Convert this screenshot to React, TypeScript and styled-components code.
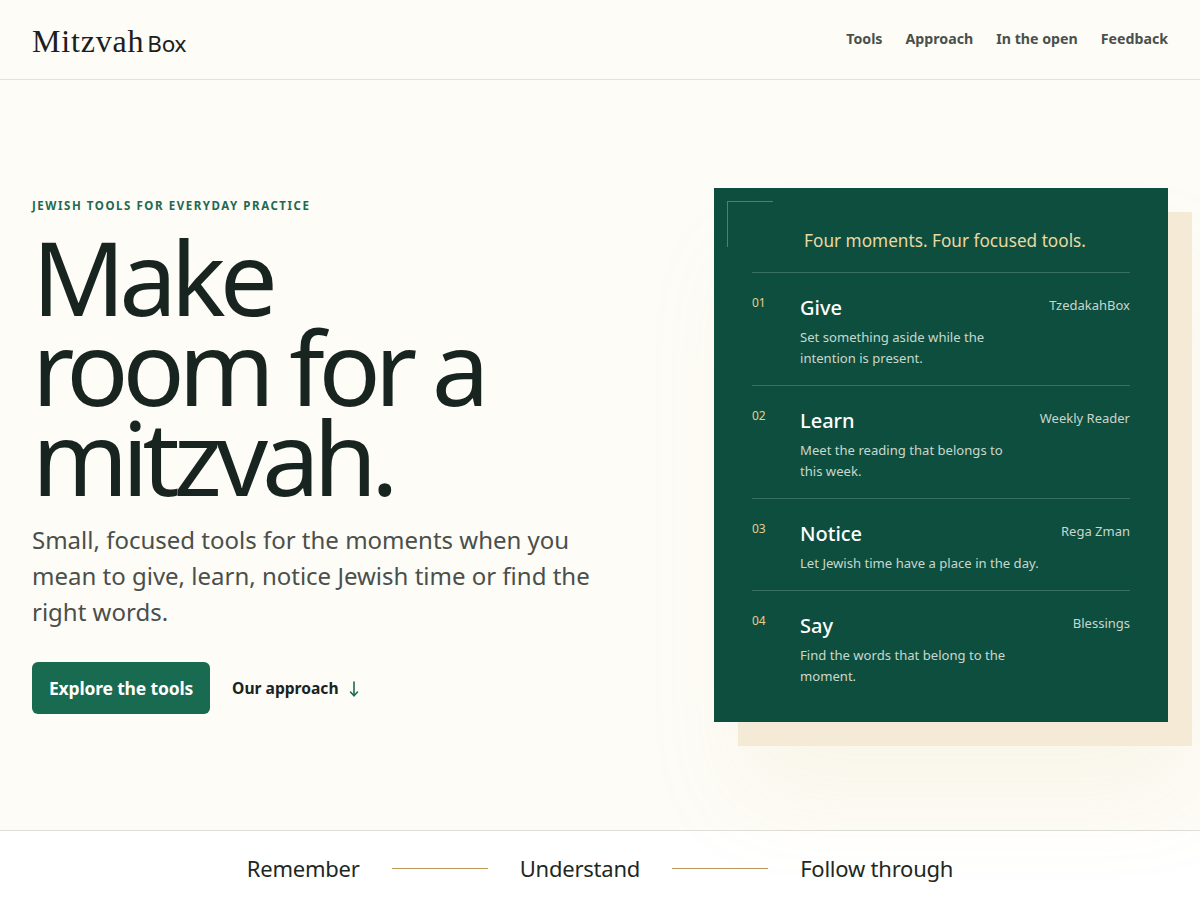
import React from "react";
import styled, { createGlobalStyle } from "styled-components";

const Global = createGlobalStyle`
  html, body { margin: 0; padding: 0; }
  body {
    background: #fdfcf7;
    font-family: "Noto Sans", "Open Sans", sans-serif;
    color: #18251f;
    -webkit-font-smoothing: antialiased;
  }
  * { box-sizing: border-box; }
`;

const Page = styled.div`
  min-height: 900px;
  display: flex;
  flex-direction: column;
  overflow: hidden;
`;

const Header = styled.header`
  height: 80px;
  padding: 0 32px;
  display: flex;
  align-items: center;
  justify-content: space-between;
  border-bottom: 1px solid #e4e3dc;
`;

const Logo = styled.a`
  display: flex;
  align-items: baseline;
  gap: 3px;
  color: #1a201d;
  text-decoration: none;
  margin-top: 3px;
`;

const LogoSerif = styled.span`
  font-family: "Liberation Serif", "DejaVu Serif", serif;
  font-size: 32px;
  letter-spacing: 0.025em;
`;

const LogoSans = styled.span`
  font-family: "Noto Sans", "Open Sans", sans-serif;
  font-size: 22.5px;
  letter-spacing: -0.01em;
`;

const Nav = styled.nav`
  display: flex;
  gap: 23px;
  margin-top: -2px;
`;

const NavLink = styled.a`
  font-size: 14.2px;
  font-weight: 700;
  color: #4a504c;
  text-decoration: none;
`;

const Hero = styled.section`
  flex: 1;
  height: 750px;
  padding: 0 32px;
  display: grid;
  grid-template-columns: 1fr 454px;
  gap: 48px;
  align-items: center;
`;

const Left = styled.div`
  display: flex;
  flex-direction: column;
  margin-top: 2px;
`;

const Eyebrow = styled.p`
  margin: 0;
  font-size: 11.5px;
  font-weight: 700;
  letter-spacing: 0.135em;
  color: #1d6a51;
  text-transform: uppercase;
`;

const Headline = styled.h1`
  margin: 18px 0 0 0;
  font-size: 103px;
  font-weight: 400;
  line-height: 90px;
  letter-spacing: -0.06em;
  color: #18241f;
`;

const Lead = styled.p`
  margin: 21px 0 0 0;
  max-width: 580px;
  font-size: 24px;
  line-height: 36px;
  color: #4a4f4b;
`;

const Actions = styled.div`
  margin-top: 32px;
  display: flex;
  align-items: center;
  gap: 22px;
`;

const Primary = styled.a`
  display: inline-flex;
  align-items: center;
  height: 52px;
  padding: 0 17px;
  border-radius: 6px;
  background: #186a51;
  color: #ffffff;
  font-size: 17.5px;
  font-weight: 700;
  text-decoration: none;
  letter-spacing: -0.01em;
`;

const Secondary = styled.a`
  display: inline-flex;
  align-items: center;
  gap: 9px;
  font-size: 15.6px;
  font-weight: 700;
  color: #18241f;
  text-decoration: none;
`;

const ArrowIcon = styled.svg`
  width: 12px;
  height: 18px;
  color: #1d6a51;
  margin-top: 2px;
`;

const CardWrap = styled.div`
  position: relative;
  margin: 24px 0;
`;

const Plate = styled.div`
  position: absolute;
  left: 24px;
  top: 24px;
  right: -24px;
  bottom: -24px;
  background: #f4ead6;
  box-shadow: 0 50px 90px rgba(215, 185, 120, 0.1);
`;

const Card = styled.div`
  position: relative;
  background: #0e4e3e;
  padding: 39px 38px 19px 38px;
`;

const Corner = styled.span`
  position: absolute;
  left: 13px;
  top: 13px;
  width: 46px;
  height: 46px;
  border-top: 1px solid rgba(200, 225, 210, 0.35);
  border-left: 1px solid rgba(200, 225, 210, 0.35);
`;

const CardTitle = styled.p`
  margin: 0 0 18px 0;
  text-align: center;
  padding-left: 8px;
  font-size: 17.2px;
  line-height: 27px;
  color: #ead9a2;
`;

const List = styled.ol`
  list-style: none;
  margin: 0;
  padding: 0;
`;

const Row = styled.li`
  display: grid;
  grid-template-columns: 32px 1fr auto;
  column-gap: 16px;
  padding: 21px 0 16px 0;
  border-top: 1px solid rgba(170, 205, 185, 0.28);
`;

const Num = styled.span`
  grid-row: 1 / span 2;
  font-size: 12px;
  line-height: 18px;
  color: #e2cf8e;
`;

const Name = styled.span`
  font-size: 20px;
  font-weight: 500;
  line-height: 27px;
  color: #ffffff;
`;

const Tool = styled.span`
  grid-column: 3;
  grid-row: 1;
  font-size: 13px;
  line-height: 20px;
  margin-top: 1px;
  color: #c8d6cd;
  text-align: right;
`;

const Desc = styled.span`
  grid-column: 2;
  grid-row: 2;
  margin-top: 6px;
  font-size: 13.1px;
  line-height: 21px;
  color: #c8d7cd;
`;

const Strip = styled.footer`
  height: 70px;
  background: #ffffff;
  border-top: 1px solid #dedfd8;
  display: flex;
  align-items: center;
  justify-content: center;
  gap: 32px;
  padding-top: 5px;
`;

const StripWord = styled.span`
  font-size: 22px;
  color: #1e2823;
  letter-spacing: -0.01em;
`;

const StripLine = styled.span`
  width: 96px;
  height: 1px;
  background: #b8995a;
`;

const tools = [
  { n: "01", name: "Give", tool: "TzedakahBox", desc: "Set something aside while the intention is present." },
  { n: "02", name: "Learn", tool: "Weekly Reader", desc: "Meet the reading that belongs to this week." },
  { n: "03", name: "Notice", tool: "Rega Zman", desc: "Let Jewish time have a place in the day." },
  { n: "04", name: "Say", tool: "Blessings", desc: "Find the words that belong to the moment." },
];

export default function App() {
  return (
    <Page>
      <Global />
      <Header>
        <Logo href="#">
          <LogoSerif>Mitzvah</LogoSerif>
          <LogoSans>Box</LogoSans>
        </Logo>
        <Nav>
          <NavLink href="#">Tools</NavLink>
          <NavLink href="#">Approach</NavLink>
          <NavLink href="#">In the open</NavLink>
          <NavLink href="#">Feedback</NavLink>
        </Nav>
      </Header>
      <Hero>
        <Left>
          <Eyebrow>Jewish tools for everyday practice</Eyebrow>
          <Headline>
            Make
            <br />
            room for a
            <br />
            mitzvah.
          </Headline>
          <Lead>
            Small, focused tools for the moments when you mean to give, learn, notice Jewish time or find the right words.
          </Lead>
          <Actions>
            <Primary href="#">Explore the tools</Primary>
            <Secondary href="#">
              Our approach
              <ArrowIcon viewBox="0 0 12 18" fill="none" stroke="currentColor" strokeWidth="1.6" strokeLinecap="round" strokeLinejoin="round">
                <path d="M6 2v13.5" />
                <path d="M2.5 12l3.5 3.8 3.5-3.8" />
              </ArrowIcon>
            </Secondary>
          </Actions>
        </Left>
        <CardWrap>
          <Plate />
          <Card>
            <Corner />
            <CardTitle>Four moments. Four focused tools.</CardTitle>
            <List>
              {tools.map((t) => (
                <Row key={t.n}>
                  <Num>{t.n}</Num>
                  <Name>{t.name}</Name>
                  <Tool>{t.tool}</Tool>
                  <Desc>{t.desc}</Desc>
                </Row>
              ))}
            </List>
          </Card>
        </CardWrap>
      </Hero>
      <Strip>
        <StripWord>Remember</StripWord>
        <StripLine />
        <StripWord>Understand</StripWord>
        <StripLine />
        <StripWord>Follow through</StripWord>
      </Strip>
    </Page>
  );
}
